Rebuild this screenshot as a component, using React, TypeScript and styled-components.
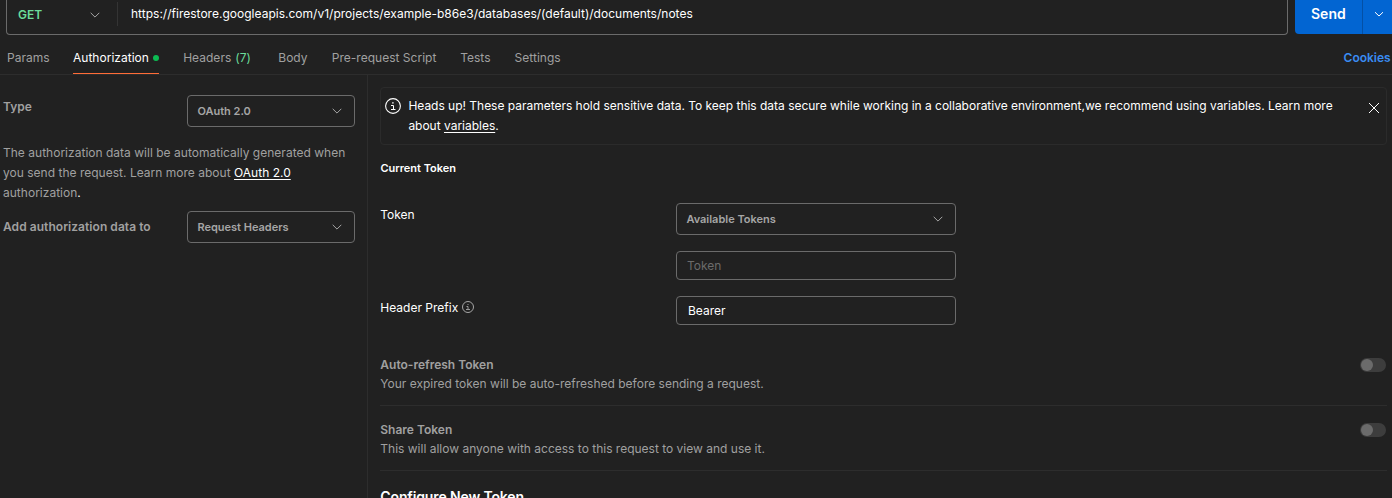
import React from "react";
import styled, { createGlobalStyle } from "styled-components";

const Global = createGlobalStyle`
  * { box-sizing: border-box; }
  body {
    margin: 0;
    background: #212121;
    color: #fff;
    font: 12px/20px Inter, "Liberation Sans", sans-serif;
    overflow: hidden;
  }
`;

const Page = styled.div`
  display: flex;
  flex-direction: column;
  width: 1392px;
  height: 498px;
  overflow: hidden;
`;

const RequestBar = styled.div`
  display: flex;
  height: 35px;
  flex: none;
  padding-left: 6px;
`;

const UrlBox = styled.div`
  display: flex;
  width: 1282px;
  height: 35px;
  border: 1px solid #6b6b6b;
  border-top: 0;
  border-radius: 0 0 4px 4px;
`;

const Method = styled.div`
  display: flex;
  justify-content: space-between;
  width: 111px;
  height: 24px;
  margin-top: 2px;
  padding: 3px 17px 0 11px;
  border-right: 1px solid #343434;
  color: #6bdd9a;
  font-weight: 600;
  line-height: 20px;
`;

const Url = styled.div`
  padding: 4px 0 0 13px;
  letter-spacing: 0.012px;
`;

const SendGroup = styled.div`
  display: flex;
  width: 97px;
  height: 34px;
  margin-left: 7px;
  background: #0265d2;
  border-bottom-left-radius: 4px;
`;

const SendLabel = styled.div`
  width: 68px;
  padding: 4px 0 0 16px;
  border-right: 1px solid #0450a5;
  font-size: 14px;
  font-weight: 600;
`;

const SendMore = styled.div`
  display: flex;
  padding: 9px 0 0 11px;
`;

const TabBar = styled.div`
  display: flex;
  height: 40px;
  flex: none;
  padding: 13px 1.3px 0 7px;
  border-bottom: 1px solid #2d2d2d;
`;

const Tab = styled.div<{ $active?: boolean; $width: number }>`
  display: flex;
  align-items: flex-start;
  width: ${(p) => p.$width}px;
  height: 26px;
  margin-right: 24px;
  white-space: nowrap;
  letter-spacing: 0.015px;
  color: ${(p) => (p.$active ? "#fff" : "#a0a0a0")};
  border-bottom: 1px solid ${(p) => (p.$active ? "#ff6c37" : "transparent")};
`;

const Dot = styled.i`
  width: 6px;
  height: 6px;
  margin: 7px 0 0 auto;
  border-radius: 50%;
  background: #0cbb52;
`;

const Count = styled.span`
  margin-left: 4px;
  color: #6bdd9a;
`;

const Cookies = styled.div`
  margin-left: auto;
  color: #3a8cf2;
  font-weight: 600;
`;

const Columns = styled.div`
  display: flex;
  flex: 1;
  min-height: 0;
`;

const Sidebar = styled.aside`
  width: 368px;
  flex: none;
  padding: 20px 12px 0 3px;
  border-right: 1px solid #2d2d2d;
  color: #a0a0a0;
`;

const SideRow = styled.div`
  display: flex;
  justify-content: space-between;
`;

const SideLabel = styled.div<{ $top: number }>`
  padding-top: ${(p) => p.$top}px;
  font-weight: 600;
  letter-spacing: 0.05px;
`;

const Select = styled.div<{ $width: number }>`
  display: flex;
  align-items: center;
  justify-content: space-between;
  width: ${(p) => p.$width}px;
  height: 32px;
  padding: 0 12px 0 9.4px;
  border: 1px solid #6b6b6b;
  border-radius: 4px;
  color: #a6a6a6;
  font-size: 11px;
  font-weight: 600;
`;

const Help = styled.p`
  margin: 16px 0 8px;
  letter-spacing: 0.015px;
`;

const Link = styled.a`
  color: #fff;
  text-decoration: underline;
  text-underline-offset: 2px;
`;

const Bright = styled.span`
  color: #fff;
`;

const Main = styled.main`
  flex: 1;
  min-width: 0;
  padding: 12px 5px 0 12px;
`;

const Notice = styled.div`
  display: flex;
  height: 58px;
  padding: 8px 6px 0 4px;
  border: 1px solid #2b2b2b;
  border-radius: 4px;
`;

const NoticeText = styled.div`
  flex: 1;
  padding-left: 7.4px;
  white-space: nowrap;
  letter-spacing: -0.016px;
`;

const NoticeIcon = styled.div`
  display: flex;
  padding-top: 2px;
`;

const CloseIcon = styled.div`
  display: flex;
  padding-top: 6px;
`;

const SectionTitle = styled.h3`
  margin: 13px 0 25px;
  padding-left: 0.4px;
  font-size: 11px;
  line-height: 20px;
  font-weight: 600;
`;

const Field = styled.div<{ $height: number }>`
  display: flex;
  height: ${(p) => p.$height}px;
`;

const FieldLabel = styled.div`
  display: flex;
  width: 296px;
  gap: 4px;
  padding: 2px 0 0 0.3px;
`;

const Input = styled.div<{ $placeholder?: boolean }>`
  width: 280px;
  height: 29px;
  padding: 4px 0 0 ${(p) => (p.$placeholder ? 10 : 11)}px;
  border: 1px solid #6b6b6b;
  border-radius: 4px;
  line-height: 20px;
  color: ${(p) => (p.$placeholder ? "#6b6b6b" : "#fff")};
`;

const Setting = styled.div`
  display: flex;
  justify-content: space-between;
  height: 65px;
  padding: 14px 1px 0 0.3px;
  border-bottom: 1px solid #2d2d2d;
  color: #a0a0a0;
`;

const SettingName = styled.div`
  font-weight: 600;
  line-height: 19px;
`;

const SettingHint = styled.div`
  line-height: 19px;
`;

const Toggle = styled.div`
  width: 26px;
  height: 14px;
  margin: 3px 0 0;
  padding: 1px;
  border-radius: 7px;
  background: #3d3d3d;

  &::before {
    content: "";
    display: block;
    width: 12px;
    height: 12px;
    border-radius: 50%;
    background: #6b6b6b;
  }
`;

const Configure = styled.h2`
  margin: 16px 0 0;
  padding-left: 0.3px;
  font-size: 14px;
  line-height: 20px;
  font-weight: 600;
  letter-spacing: -0.13px;
`;

const Chevron = ({ color = "#a6a6a6" }: { color?: string }) => (
  <svg width="10" height="20" viewBox="0 0 10 20" fill="none" stroke={color}>
    <path d="M.7 7.8 5 12.1 9.3 7.8" />
  </svg>
);

const Info = ({ size, color }: { size: number; color: string }) => (
  <svg width={size} height={size} viewBox="0 0 16 16" fill="none" stroke={color}>
    <circle cx="8" cy="8" r="7.4" strokeWidth="1.1" />
    <path d="M6 7.5H8.5V11.5M6 11.5H10.5" strokeWidth="1" />
    <rect x="7.2" y="4.2" width="1.4" height="1.4" fill={color} stroke="none" />
  </svg>
);

export default function App() {
  return (
    <Page>
      <Global />
      <RequestBar>
        <UrlBox>
          <Method>
            GET
            <Chevron />
          </Method>
          <Url>
            https://firestore.googleapis.com/v1/projects/example-b86e3/databases/(default)/documents/notes
          </Url>
        </UrlBox>
        <SendGroup>
          <SendLabel>Send</SendLabel>
          <SendMore>
            <svg width="10" height="10" viewBox="0 0 10 10" fill="none" stroke="#fff">
              <path d="M1 3.2 5 7 9 3.2" />
            </svg>
          </SendMore>
        </SendGroup>
      </RequestBar>
      <TabBar>
        <Tab $width={42}>Params</Tab>
        <Tab $width={86.2} $active>
          Authorization
          <Dot />
        </Tab>
        <Tab $width={71.1}>
          Headers<Count>(7)</Count>
        </Tab>
        <Tab $width={29.5}>Body</Tab>
        <Tab $width={104.4}>Pre-request Script</Tab>
        <Tab $width={30.4}>Tests</Tab>
        <Tab $width={48}>Settings</Tab>
        <Cookies>Cookies</Cookies>
      </TabBar>
      <Columns>
        <Sidebar>
          <SideRow>
            <SideLabel $top={2}>Type</SideLabel>
            <Select $width={168}>
              OAuth 2.0
              <Chevron />
            </Select>
          </SideRow>
          <Help>
            The authorization data will be automatically generated when
            <br />
            you send the request. Learn more about <Link>OAuth 2.0</Link>
            <br />
            authorization<Bright>.</Bright>
          </Help>
          <SideRow>
            <SideLabel $top={6}>Add authorization data to</SideLabel>
            <Select $width={168}>
              Request Headers
              <Chevron />
            </Select>
          </SideRow>
        </Sidebar>
        <Main>
          <Notice>
            <NoticeIcon>
              <Info size={16} color="#fff" />
            </NoticeIcon>
            <NoticeText>
              Heads up! These parameters hold sensitive data. To keep this data secure while working in a
              collaborative environment,we recommend using variables. Learn more
              <br />
              about <Link>variables</Link>.
            </NoticeText>
            <CloseIcon>
              <svg width="12" height="12" viewBox="0 0 12 12" stroke="#fff">
                <path d="M1 1 11 11M11 1 1 11" />
              </svg>
            </CloseIcon>
          </Notice>
          <SectionTitle>Current Token</SectionTitle>
          <Field $height={48}>
            <FieldLabel>Token</FieldLabel>
            <Select $width={280}>
              Available Tokens
              <Chevron />
            </Select>
          </Field>
          <Field $height={45}>
            <FieldLabel />
            <Input $placeholder>Token</Input>
          </Field>
          <Field $height={45}>
            <FieldLabel>
              Header Prefix
              <svg width="12" height="20" viewBox="0 0 12 20" fill="none" stroke="#a6a6a6">
                <circle cx="6" cy="9" r="5.5" />
                <path d="M4.5 8.5H6V11.5M4 11.5H8M5.5 6.5H6.5" strokeWidth=".9" />
              </svg>
            </FieldLabel>
            <Input>Bearer</Input>
          </Field>
          <Setting>
            <div>
              <SettingName>Auto-refresh Token</SettingName>
              <SettingHint>Your expired token will be auto-refreshed before sending a request.</SettingHint>
            </div>
            <Toggle />
          </Setting>
          <Setting>
            <div>
              <SettingName>Share Token</SettingName>
              <SettingHint>
                This will allow anyone with access to this request to view and use it.
              </SettingHint>
            </div>
            <Toggle />
          </Setting>
          <Configure>Configure New Token</Configure>
        </Main>
      </Columns>
    </Page>
  );
}
